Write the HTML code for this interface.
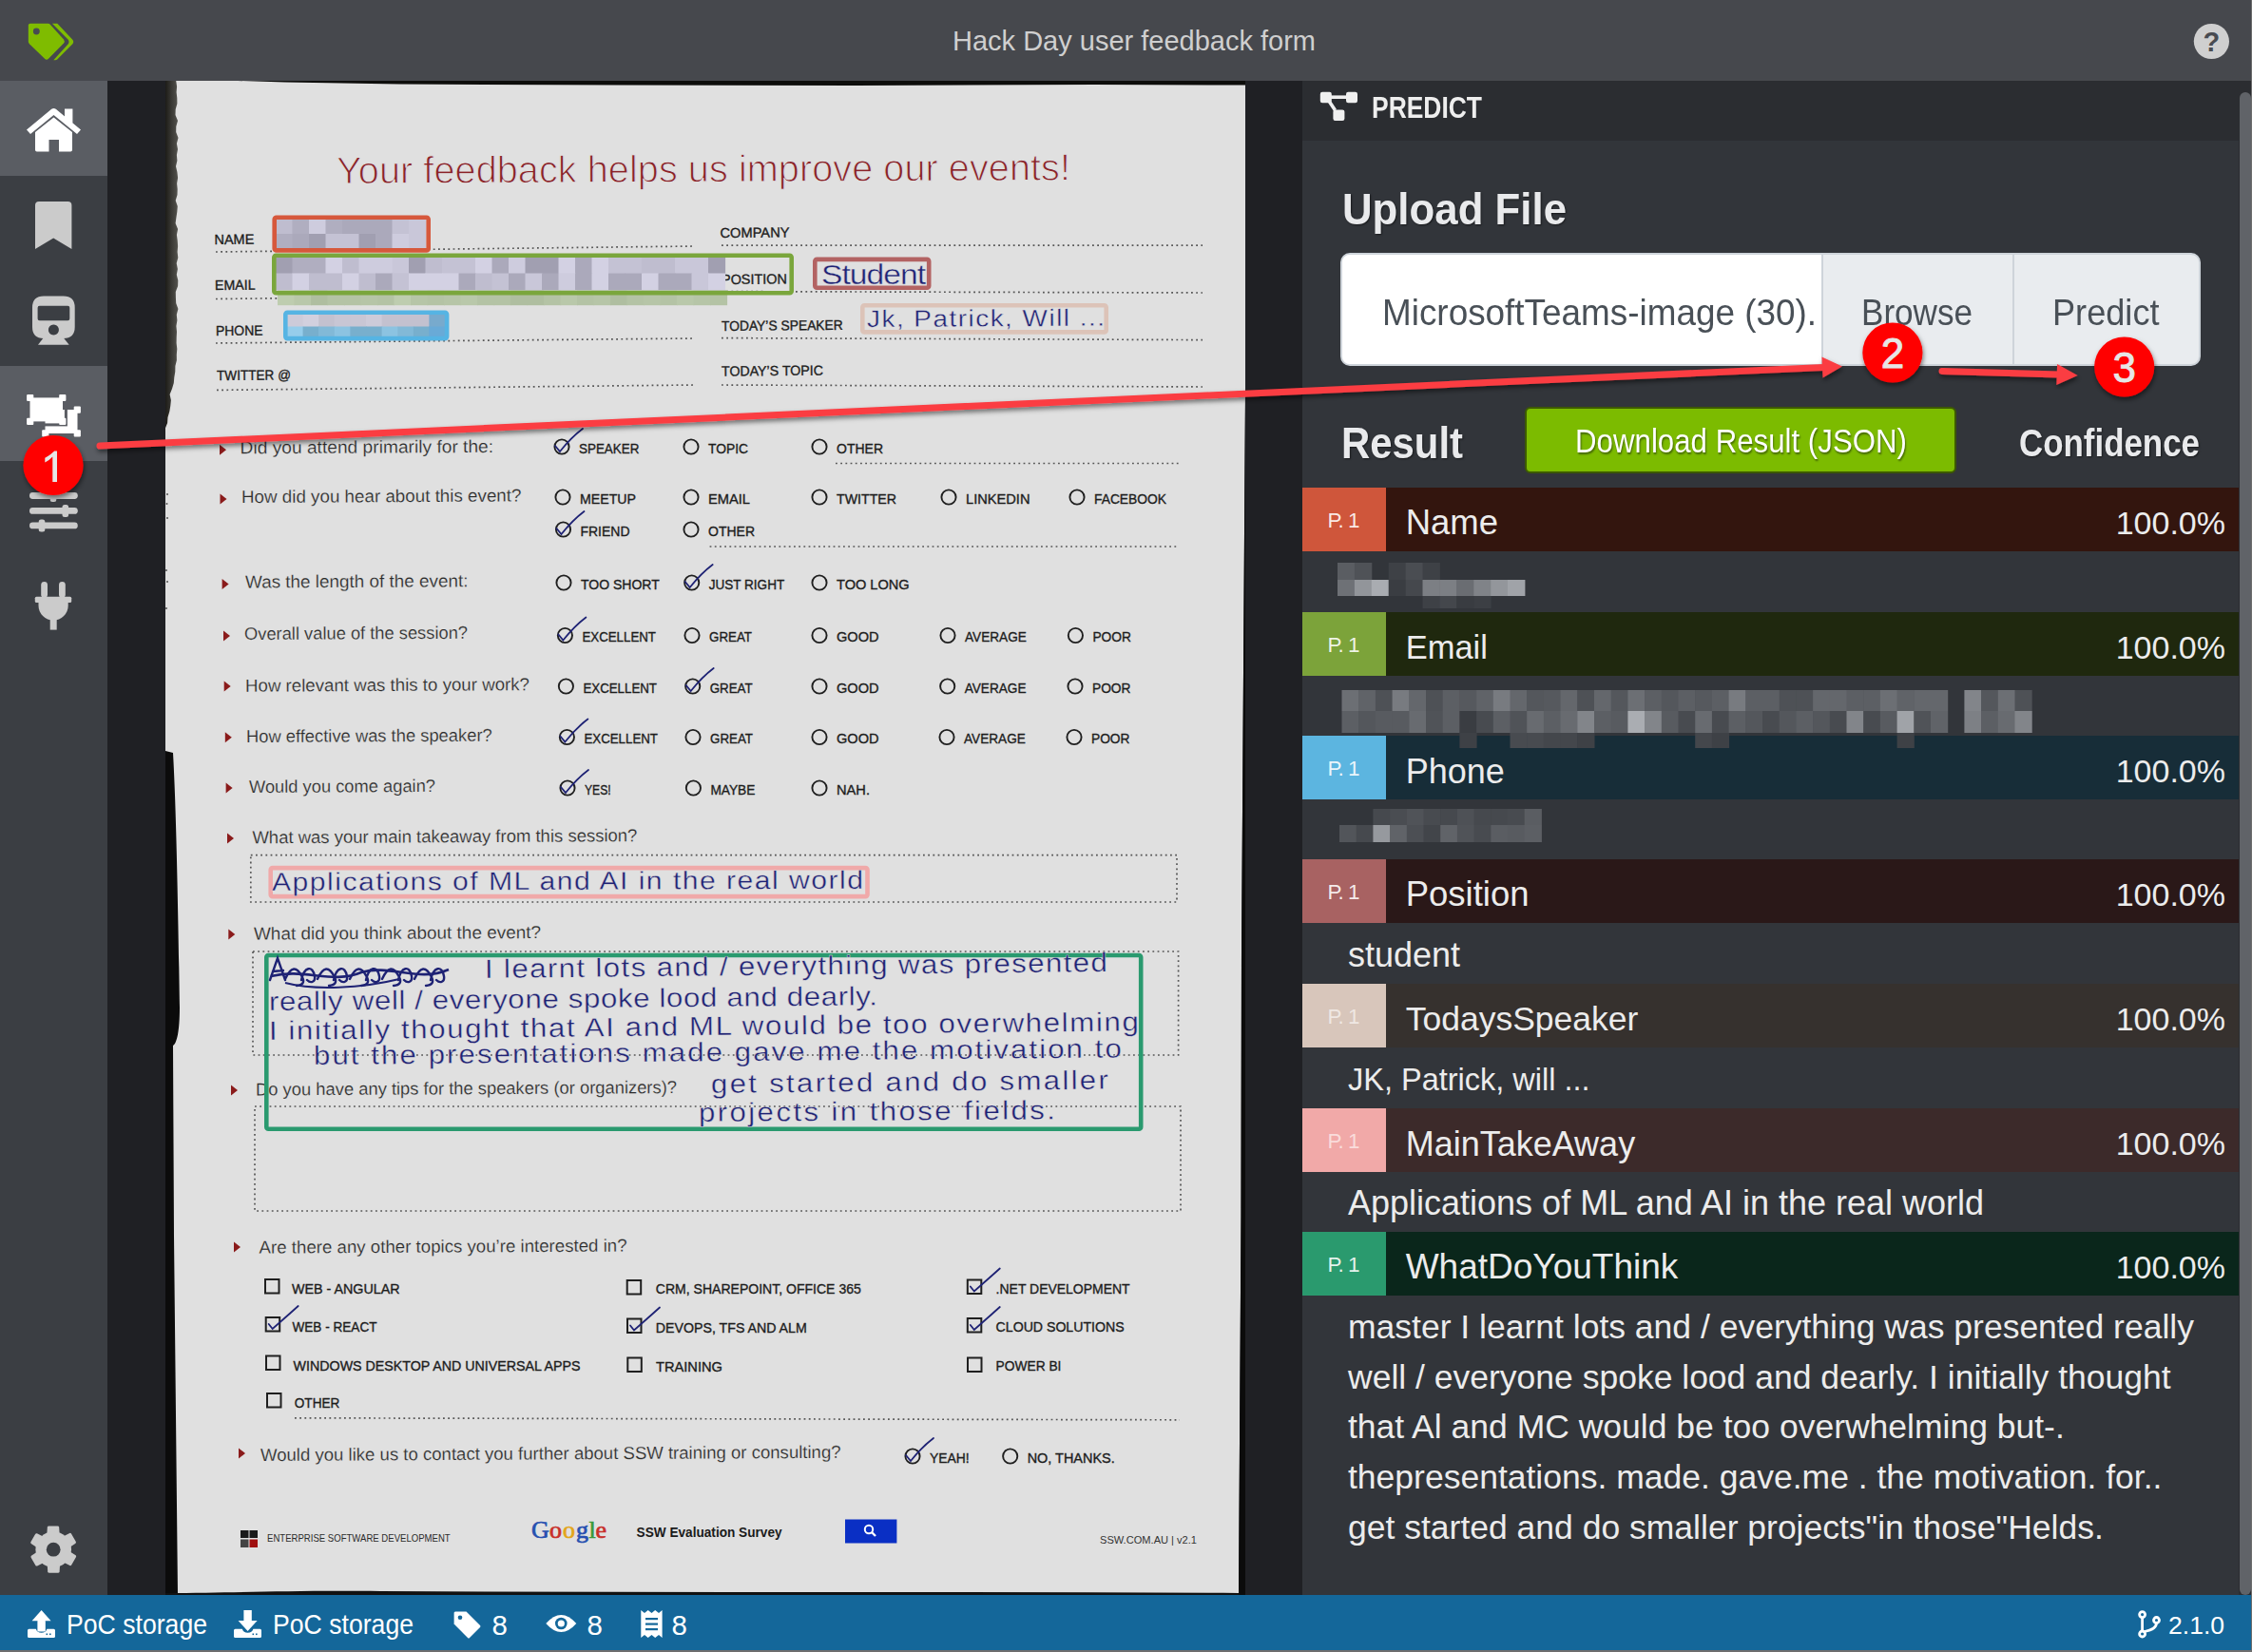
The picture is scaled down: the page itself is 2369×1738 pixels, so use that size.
<!DOCTYPE html><html><head><meta charset="utf-8"><title>VoTT</title><style>
html,body{margin:0;padding:0;}
body{width:2369px;height:1738px;overflow:hidden;position:relative;background:#6e6e6e;font-family:"Liberation Sans", sans-serif;}
svg{position:absolute;left:0;top:0;}
</style></head><body>
<div style="position:absolute;left:0px;top:0px;width:2368px;height:85px;background:#46484d;"></div>
<div style="position:absolute;left:0px;top:85px;width:113px;height:1593px;background:#3b3e43;"></div>
<div style="position:absolute;left:0px;top:85px;width:113px;height:100px;background:#5a5d63;"></div>
<div style="position:absolute;left:0px;top:385px;width:113px;height:100px;background:#5a5d63;"></div>
<div style="position:absolute;left:113px;top:85px;width:1257px;height:1593px;background:#1f2024;"></div>
<div style="position:absolute;left:1370px;top:85px;width:985px;height:1593px;background:#32353a;"></div>
<div style="position:absolute;left:1370px;top:85px;width:985px;height:63px;background:#2b2d31;"></div>
<div style="position:absolute;left:2355px;top:85px;width:13px;height:1593px;background:#2b2d31;"></div>
<div style="position:absolute;left:2356px;top:97px;width:12px;height:1581px;background:#606368;border-radius:6px;"></div>
<div style="position:absolute;left:0px;top:1678px;width:2368px;height:58px;background:#14679a;"></div>
<div style="position:absolute;left:1002px;top:26.15px;font-size:29px;line-height:35px;color:#cfcfcf;font-weight:400;white-space:nowrap;">Hack Day user feedback form</div>
<svg width="2369" height="1738" viewBox="0 0 2369 1738" style="position:absolute;left:0;top:0"><polygon points="174,85 1310,85 1310,415 1306,1000 1305.5,1280 1303,1678 174,1678" fill="#e0e0e0"/><defs><linearGradient id="le" x1="0" x2="1" y1="0" y2="0"><stop offset="0" stop-color="#1c1b16"/><stop offset="0.5" stop-color="#3a3935"/><stop offset="1" stop-color="#55544f"/></linearGradient></defs><polygon points="174,85 185.2,85 186.1,91 185.6,97 186.3,103 186.4,109 184.7,115 184.5,121 187.0,127 185.3,133 185.2,139 187.5,145 185.9,151 187.0,157 185.9,163 186.4,169 185.0,175 186.4,181 187.1,187 186.1,193 186.7,199 186.5,205 184.7,211 186.8,217 186.3,223 185.4,229 184.6,235 187.1,241 185.9,247 186.7,253 187.1,259 186.6,265 187.3,271 185.7,277 186.9,283 185.8,289 187.3,295 187.1,301 184.8,307 184.9,313 185.2,319 187.4,325 185.8,331 186.4,337 185.4,343 186.0,349 185.7,355 185.6,361 186.3,367 185.8,373 185.9,379 184.4,385 184.3,391 183.3,397 182.8,403 181.0,409 178.6,415 179.9,421 179.3,427 178.3,433 176.5,439 176.1,445 173.7,451 174,460" fill="url(#le)"/><path d="M174,790 L182,792 C186,860 188,1000 189,1060 C189,1085 186,1098 182,1100 L183,1300 L187,1678 L174,1678 Z" fill="#0b0b0b"/><polygon points="1310,415 1310,1678 1303,1678 1305.5,1280 1306,1000" fill="#0b0b0b"/><circle cx="176" cy="520" r="1" fill="#555"/><circle cx="175.5" cy="530" r="1" fill="#555"/><circle cx="176" cy="545" r="1" fill="#555"/><circle cx="175" cy="600" r="1" fill="#555"/><circle cx="176" cy="612" r="1" fill="#555"/><circle cx="175" cy="640" r="1" fill="#555"/><polygon points="250,85 1310,85 1310,89.5 1150,89 900,90 650,89.5 420,88.5 300,86.5" fill="#0d0d0b"/><text x="354" y="193" font-family="Liberation Sans" font-size="39.75" font-weight="400" font-style="normal" fill="#8a2228" textLength="772.0" lengthAdjust="spacingAndGlyphs" transform="rotate(-0.26 354 193)" stroke="#e0e0e0" stroke-width="1.1">Your feedback helps us improve our events!</text><text x="225.4" y="257" font-family="Liberation Sans" font-size="14.5" font-weight="400" font-style="normal" fill="#1d1d1d" textLength="42.0" lengthAdjust="spacingAndGlyphs" transform="rotate(-0.5 225.4 257)" stroke="#1d1d1d" stroke-width="0.35">NAME</text><text x="226" y="305" font-family="Liberation Sans" font-size="14.5" font-weight="400" font-style="normal" fill="#1d1d1d" textLength="42.6" lengthAdjust="spacingAndGlyphs" transform="rotate(-0.5 226 305)" stroke="#1d1d1d" stroke-width="0.35">EMAIL</text><text x="227" y="353" font-family="Liberation Sans" font-size="14.5" font-weight="400" font-style="normal" fill="#1d1d1d" textLength="49.6" lengthAdjust="spacingAndGlyphs" transform="rotate(-0.5 227 353)" stroke="#1d1d1d" stroke-width="0.35">PHONE</text><text x="228" y="400" font-family="Liberation Sans" font-size="14.5" font-weight="400" font-style="normal" fill="#1d1d1d" textLength="78.0" lengthAdjust="spacingAndGlyphs" transform="rotate(-0.5 228 400)" stroke="#1d1d1d" stroke-width="0.35">TWITTER @</text><text x="757.5" y="250" font-family="Liberation Sans" font-size="14.5" font-weight="400" font-style="normal" fill="#1d1d1d" textLength="73.0" lengthAdjust="spacingAndGlyphs" transform="rotate(-0.5 757.5 250)" stroke="#1d1d1d" stroke-width="0.35">COMPANY</text><text x="759" y="299" font-family="Liberation Sans" font-size="14.5" font-weight="400" font-style="normal" fill="#1d1d1d" textLength="69.0" lengthAdjust="spacingAndGlyphs" transform="rotate(-0.5 759 299)" stroke="#1d1d1d" stroke-width="0.35">POSITION</text><text x="759" y="348" font-family="Liberation Sans" font-size="14.5" font-weight="400" font-style="normal" fill="#1d1d1d" textLength="127.8" lengthAdjust="spacingAndGlyphs" transform="rotate(-0.5 759 348)" stroke="#1d1d1d" stroke-width="0.35">TODAY’S SPEAKER</text><text x="759" y="395.5" font-family="Liberation Sans" font-size="14.5" font-weight="400" font-style="normal" fill="#1d1d1d" textLength="107.0" lengthAdjust="spacingAndGlyphs" transform="rotate(-0.5 759 395.5)" stroke="#1d1d1d" stroke-width="0.35">TODAY’S TOPIC</text><line x1="227" y1="265" x2="729.5" y2="259" stroke="#555555" stroke-width="1.7" stroke-dasharray="1.8 3.4000000000000004"/><line x1="227" y1="314.5" x2="729.5" y2="309" stroke="#555555" stroke-width="1.7" stroke-dasharray="1.8 3.4000000000000004"/><line x1="227" y1="361" x2="729.5" y2="356" stroke="#555555" stroke-width="1.7" stroke-dasharray="1.8 3.4000000000000004"/><line x1="228" y1="410.4" x2="729.5" y2="405" stroke="#555555" stroke-width="1.7" stroke-dasharray="1.8 3.4000000000000004"/><line x1="759" y1="258.2" x2="1265" y2="258.2" stroke="#555555" stroke-width="1.7" stroke-dasharray="1.8 3.4000000000000004"/><line x1="759" y1="306.6" x2="1265" y2="308" stroke="#555555" stroke-width="1.7" stroke-dasharray="1.8 3.4000000000000004"/><line x1="759" y1="355.6" x2="1265" y2="357.6" stroke="#555555" stroke-width="1.7" stroke-dasharray="1.8 3.4000000000000004"/><line x1="759" y1="405" x2="1265" y2="407" stroke="#555555" stroke-width="1.7" stroke-dasharray="1.8 3.4000000000000004"/><rect x="290.0" y="230.0" width="18.1" height="16.6" fill="rgb(191,189,207)"/><rect x="307.5" y="230.0" width="18.1" height="16.6" fill="rgb(176,174,192)"/><rect x="325.0" y="230.0" width="18.1" height="16.6" fill="rgb(206,204,222)"/><rect x="342.5" y="230.0" width="18.1" height="16.6" fill="rgb(176,174,192)"/><rect x="360.0" y="230.0" width="18.1" height="16.6" fill="rgb(171,169,187)"/><rect x="377.5" y="230.0" width="18.1" height="16.6" fill="rgb(171,169,187)"/><rect x="395.0" y="230.0" width="18.1" height="16.6" fill="rgb(171,169,187)"/><rect x="412.5" y="230.0" width="18.1" height="16.6" fill="rgb(196,194,212)"/><rect x="430.0" y="230.0" width="18.1" height="16.6" fill="rgb(201,199,217)"/><rect x="290.0" y="246.0" width="18.1" height="16.6" fill="rgb(176,174,192)"/><rect x="307.5" y="246.0" width="18.1" height="16.6" fill="rgb(171,169,187)"/><rect x="325.0" y="246.0" width="18.1" height="16.6" fill="rgb(161,159,177)"/><rect x="342.5" y="246.0" width="18.1" height="16.6" fill="rgb(196,194,212)"/><rect x="360.0" y="246.0" width="18.1" height="16.6" fill="rgb(196,194,212)"/><rect x="377.5" y="246.0" width="18.1" height="16.6" fill="rgb(161,159,177)"/><rect x="395.0" y="246.0" width="18.1" height="16.6" fill="rgb(171,169,187)"/><rect x="412.5" y="246.0" width="18.1" height="16.6" fill="rgb(206,204,222)"/><rect x="430.0" y="246.0" width="18.1" height="16.6" fill="rgb(201,199,217)"/><rect x="290.0" y="270.0" width="18.1" height="18.1" fill="rgb(161,159,177)"/><rect x="307.5" y="270.0" width="18.1" height="18.1" fill="rgb(176,174,192)"/><rect x="325.0" y="270.0" width="18.1" height="18.1" fill="rgb(176,174,192)"/><rect x="342.5" y="270.0" width="18.1" height="18.1" fill="rgb(211,209,227)"/><rect x="360.0" y="270.0" width="18.1" height="18.1" fill="rgb(191,189,207)"/><rect x="377.5" y="270.0" width="18.1" height="18.1" fill="rgb(206,204,222)"/><rect x="395.0" y="270.0" width="18.1" height="18.1" fill="rgb(206,204,222)"/><rect x="412.5" y="270.0" width="18.1" height="18.1" fill="rgb(201,199,217)"/><rect x="430.0" y="270.0" width="18.1" height="18.1" fill="rgb(161,159,177)"/><rect x="447.5" y="270.0" width="18.1" height="18.1" fill="rgb(191,189,207)"/><rect x="465.0" y="270.0" width="18.1" height="18.1" fill="rgb(196,194,212)"/><rect x="482.5" y="270.0" width="18.1" height="18.1" fill="rgb(196,194,212)"/><rect x="500.0" y="270.0" width="18.1" height="18.1" fill="rgb(211,209,227)"/><rect x="517.5" y="270.0" width="18.1" height="18.1" fill="rgb(171,169,187)"/><rect x="535.0" y="270.0" width="18.1" height="18.1" fill="rgb(206,204,222)"/><rect x="552.5" y="270.0" width="18.1" height="18.1" fill="rgb(161,159,177)"/><rect x="570.0" y="270.0" width="18.1" height="18.1" fill="rgb(161,159,177)"/><rect x="587.5" y="270.0" width="18.1" height="18.1" fill="rgb(211,209,227)"/><rect x="605.0" y="270.0" width="18.1" height="18.1" fill="rgb(171,169,187)"/><rect x="622.5" y="270.0" width="18.1" height="18.1" fill="rgb(211,209,227)"/><rect x="640.0" y="270.0" width="18.1" height="18.1" fill="rgb(196,194,212)"/><rect x="657.5" y="270.0" width="18.1" height="18.1" fill="rgb(196,194,212)"/><rect x="675.0" y="270.0" width="18.1" height="18.1" fill="rgb(191,189,207)"/><rect x="692.5" y="270.0" width="18.1" height="18.1" fill="rgb(191,189,207)"/><rect x="710.0" y="270.0" width="18.1" height="18.1" fill="rgb(201,199,217)"/><rect x="727.5" y="270.0" width="18.1" height="18.1" fill="rgb(201,199,217)"/><rect x="745.0" y="270.0" width="18.1" height="18.1" fill="rgb(161,159,177)"/><rect x="290.0" y="287.5" width="18.1" height="18.1" fill="rgb(191,189,207)"/><rect x="307.5" y="287.5" width="18.1" height="18.1" fill="rgb(211,209,227)"/><rect x="325.0" y="287.5" width="18.1" height="18.1" fill="rgb(191,189,207)"/><rect x="342.5" y="287.5" width="18.1" height="18.1" fill="rgb(191,189,207)"/><rect x="360.0" y="287.5" width="18.1" height="18.1" fill="rgb(211,209,227)"/><rect x="377.5" y="287.5" width="18.1" height="18.1" fill="rgb(191,189,207)"/><rect x="395.0" y="287.5" width="18.1" height="18.1" fill="rgb(171,169,187)"/><rect x="412.5" y="287.5" width="18.1" height="18.1" fill="rgb(196,194,212)"/><rect x="430.0" y="287.5" width="18.1" height="18.1" fill="rgb(211,209,227)"/><rect x="447.5" y="287.5" width="18.1" height="18.1" fill="rgb(211,209,227)"/><rect x="465.0" y="287.5" width="18.1" height="18.1" fill="rgb(211,209,227)"/><rect x="482.5" y="287.5" width="18.1" height="18.1" fill="rgb(171,169,187)"/><rect x="500.0" y="287.5" width="18.1" height="18.1" fill="rgb(191,189,207)"/><rect x="517.5" y="287.5" width="18.1" height="18.1" fill="rgb(196,194,212)"/><rect x="535.0" y="287.5" width="18.1" height="18.1" fill="rgb(171,169,187)"/><rect x="552.5" y="287.5" width="18.1" height="18.1" fill="rgb(201,199,217)"/><rect x="570.0" y="287.5" width="18.1" height="18.1" fill="rgb(171,169,187)"/><rect x="587.5" y="287.5" width="18.1" height="18.1" fill="rgb(206,204,222)"/><rect x="605.0" y="287.5" width="18.1" height="18.1" fill="rgb(171,169,187)"/><rect x="622.5" y="287.5" width="18.1" height="18.1" fill="rgb(211,209,227)"/><rect x="640.0" y="287.5" width="18.1" height="18.1" fill="rgb(171,169,187)"/><rect x="657.5" y="287.5" width="18.1" height="18.1" fill="rgb(171,169,187)"/><rect x="675.0" y="287.5" width="18.1" height="18.1" fill="rgb(211,209,227)"/><rect x="692.5" y="287.5" width="18.1" height="18.1" fill="rgb(171,169,187)"/><rect x="710.0" y="287.5" width="18.1" height="18.1" fill="rgb(171,169,187)"/><rect x="727.5" y="287.5" width="18.1" height="18.1" fill="rgb(201,199,217)"/><rect x="745.0" y="287.5" width="18.1" height="18.1" fill="rgb(211,209,227)"/><rect x="292.0" y="305.0" width="18.1" height="16.2" fill="rgb(190,205,175)"/><rect x="309.5" y="305.0" width="18.1" height="16.2" fill="rgb(185,200,170)"/><rect x="327.0" y="305.0" width="18.1" height="16.2" fill="rgb(175,190,160)"/><rect x="344.5" y="305.0" width="18.1" height="16.2" fill="rgb(180,195,165)"/><rect x="362.0" y="305.0" width="18.1" height="16.2" fill="rgb(180,195,165)"/><rect x="379.5" y="305.0" width="18.1" height="16.2" fill="rgb(182,197,167)"/><rect x="397.0" y="305.0" width="18.1" height="16.2" fill="rgb(180,195,165)"/><rect x="414.5" y="305.0" width="18.1" height="16.2" fill="rgb(190,205,175)"/><rect x="432.0" y="305.0" width="18.1" height="16.2" fill="rgb(182,197,167)"/><rect x="449.5" y="305.0" width="18.1" height="16.2" fill="rgb(180,195,165)"/><rect x="467.0" y="305.0" width="18.1" height="16.2" fill="rgb(182,197,167)"/><rect x="484.5" y="305.0" width="18.1" height="16.2" fill="rgb(185,200,170)"/><rect x="502.0" y="305.0" width="18.1" height="16.2" fill="rgb(180,195,165)"/><rect x="519.5" y="305.0" width="18.1" height="16.2" fill="rgb(180,195,165)"/><rect x="537.0" y="305.0" width="18.1" height="16.2" fill="rgb(175,190,160)"/><rect x="554.5" y="305.0" width="18.1" height="16.2" fill="rgb(175,190,160)"/><rect x="572.0" y="305.0" width="18.1" height="16.2" fill="rgb(180,195,165)"/><rect x="589.5" y="305.0" width="18.1" height="16.2" fill="rgb(185,200,170)"/><rect x="607.0" y="305.0" width="18.1" height="16.2" fill="rgb(180,195,165)"/><rect x="624.5" y="305.0" width="18.1" height="16.2" fill="rgb(182,197,167)"/><rect x="642.0" y="305.0" width="18.1" height="16.2" fill="rgb(175,190,160)"/><rect x="659.5" y="305.0" width="18.1" height="16.2" fill="rgb(180,195,165)"/><rect x="677.0" y="305.0" width="18.1" height="16.2" fill="rgb(182,197,167)"/><rect x="694.5" y="305.0" width="18.1" height="16.2" fill="rgb(180,195,165)"/><rect x="712.0" y="305.0" width="18.1" height="16.2" fill="rgb(185,200,170)"/><rect x="729.5" y="305.0" width="18.1" height="16.2" fill="rgb(182,197,167)"/><rect x="747.0" y="305.0" width="18.1" height="16.2" fill="rgb(180,195,165)"/><rect x="302.0" y="330.0" width="17.2" height="14.1" fill="rgb(205,203,217)"/><rect x="318.6" y="330.0" width="17.2" height="14.1" fill="rgb(210,208,222)"/><rect x="335.2" y="330.0" width="17.2" height="14.1" fill="rgb(195,193,207)"/><rect x="351.8" y="330.0" width="17.2" height="14.1" fill="rgb(200,198,212)"/><rect x="368.4" y="330.0" width="17.2" height="14.1" fill="rgb(200,198,212)"/><rect x="385.0" y="330.0" width="17.2" height="14.1" fill="rgb(205,203,217)"/><rect x="401.6" y="330.0" width="17.2" height="14.1" fill="rgb(195,193,207)"/><rect x="418.2" y="330.0" width="17.2" height="14.1" fill="rgb(195,193,207)"/><rect x="434.8" y="330.0" width="17.2" height="14.1" fill="rgb(195,193,207)"/><rect x="451.4" y="330.0" width="17.2" height="14.1" fill="rgb(120,170,205)"/><rect x="302.0" y="343.5" width="17.2" height="14.1" fill="rgb(150,205,235)"/><rect x="318.6" y="343.5" width="17.2" height="14.1" fill="rgb(120,175,205)"/><rect x="335.2" y="343.5" width="17.2" height="14.1" fill="rgb(130,185,215)"/><rect x="351.8" y="343.5" width="17.2" height="14.1" fill="rgb(140,195,225)"/><rect x="368.4" y="343.5" width="17.2" height="14.1" fill="rgb(120,175,205)"/><rect x="385.0" y="343.5" width="17.2" height="14.1" fill="rgb(120,175,205)"/><rect x="401.6" y="343.5" width="17.2" height="14.1" fill="rgb(140,195,225)"/><rect x="418.2" y="343.5" width="17.2" height="14.1" fill="rgb(130,185,215)"/><rect x="434.8" y="343.5" width="17.2" height="14.1" fill="rgb(120,175,205)"/><rect x="451.4" y="343.5" width="17.2" height="14.1" fill="rgb(105,170,215)"/><rect x="288.7" y="228.8" width="162.00000000000003" height="34.59999999999999" rx="2" fill="none" stroke="#d6583c" stroke-width="4.6"/><rect x="288.3" y="268.8" width="544.4" height="39.4" rx="2" fill="none" stroke="#7aa63c" stroke-width="4.6"/><rect x="300.3" y="328.8" width="169.79999999999998" height="27.299999999999976" rx="2" fill="none" stroke="#56b4e3" stroke-width="4.6"/><rect x="857.3" y="272.90000000000003" width="119.9" height="29.799999999999976" rx="2" fill="none" stroke="#b36363" stroke-width="4.6"/><rect x="907.3" y="321.3" width="256.4" height="28.099999999999987" rx="2" fill="none" stroke="#dcc3b8" stroke-width="4.6"/><text x="0" y="0" font-family="Liberation Sans" font-size="30.0" fill="#1e2274" stroke="#e0e0e0" stroke-width="0.4" textLength="98.2" lengthAdjust="spacing" transform="translate(864 299) rotate(0) scale(1.12 1)">Student</text><text x="0" y="0" font-family="Liberation Sans" font-size="25.0" fill="#1e2274" stroke="#e0e0e0" stroke-width="0.4" textLength="223.2" lengthAdjust="spacing" transform="translate(912 344) rotate(-0.3) scale(1.12 1)">Jk, Patrick, Will ...</text><polygon points="231,467.8 238,473.3 231,478.8" fill="#8a1b1b"/><text x="252.6" y="477.3" font-family="Liberation Sans" font-size="18.5" font-weight="400" font-style="normal" fill="#2a2a2a" textLength="266.5" lengthAdjust="spacingAndGlyphs" transform="rotate(-0.3 252.6 477.3)" stroke="#e0e0e0" stroke-width="0.2">Did you attend primarily for the:</text><polygon points="231.5,519.5 238.5,525 231.5,530.5" fill="#8a1b1b"/><text x="254" y="529" font-family="Liberation Sans" font-size="18.5" font-weight="400" font-style="normal" fill="#2a2a2a" textLength="294.5" lengthAdjust="spacingAndGlyphs" transform="rotate(-0.3 254 529)" stroke="#e0e0e0" stroke-width="0.2">How did you hear about this event?</text><polygon points="233.6,609.0 240.6,614.5 233.6,620.0" fill="#8a1b1b"/><text x="258" y="618.5" font-family="Liberation Sans" font-size="18.5" font-weight="400" font-style="normal" fill="#2a2a2a" textLength="234.5" lengthAdjust="spacingAndGlyphs" transform="rotate(-0.3 258 618.5)" stroke="#e0e0e0" stroke-width="0.2">Was the length of the event:</text><polygon points="235,663.5 242,669 235,674.5" fill="#8a1b1b"/><text x="257" y="673" font-family="Liberation Sans" font-size="18.5" font-weight="400" font-style="normal" fill="#2a2a2a" textLength="235.0" lengthAdjust="spacingAndGlyphs" transform="rotate(-0.3 257 673)" stroke="#e0e0e0" stroke-width="0.2">Overall value of the session?</text><polygon points="235.7,716.5 242.7,722 235.7,727.5" fill="#8a1b1b"/><text x="258" y="727.7" font-family="Liberation Sans" font-size="18.5" font-weight="400" font-style="normal" fill="#2a2a2a" textLength="299.0" lengthAdjust="spacingAndGlyphs" transform="rotate(-0.3 258 727.7)" stroke="#e0e0e0" stroke-width="0.2">How relevant was this to your work?</text><polygon points="236.8,770.2 243.8,775.7 236.8,781.2" fill="#8a1b1b"/><text x="259" y="781" font-family="Liberation Sans" font-size="18.5" font-weight="400" font-style="normal" fill="#2a2a2a" textLength="258.7" lengthAdjust="spacingAndGlyphs" transform="rotate(-0.3 259 781)" stroke="#e0e0e0" stroke-width="0.2">How effective was the speaker?</text><polygon points="237.6,823.5 244.6,829 237.6,834.5" fill="#8a1b1b"/><text x="262" y="834" font-family="Liberation Sans" font-size="18.5" font-weight="400" font-style="normal" fill="#2a2a2a" textLength="196.0" lengthAdjust="spacingAndGlyphs" transform="rotate(-0.3 262 834)" stroke="#e0e0e0" stroke-width="0.2">Would you come again?</text><polygon points="239,876.5 246,882 239,887.5" fill="#8a1b1b"/><text x="265.4" y="887.3" font-family="Liberation Sans" font-size="18.5" font-weight="400" font-style="normal" fill="#2a2a2a" textLength="405.0" lengthAdjust="spacingAndGlyphs" transform="rotate(-0.3 265.4 887.3)" stroke="#e0e0e0" stroke-width="0.2">What was your main takeaway from this session?</text><polygon points="240.3,977.5 247.3,983 240.3,988.5" fill="#8a1b1b"/><text x="267" y="988.6" font-family="Liberation Sans" font-size="18.5" font-weight="400" font-style="normal" fill="#2a2a2a" textLength="302.0" lengthAdjust="spacingAndGlyphs" transform="rotate(-0.3 267 988.6)" stroke="#e0e0e0" stroke-width="0.2">What did you think about the event?</text><polygon points="243,1141.5 250,1147 243,1152.5" fill="#8a1b1b"/><text x="269" y="1152.4" font-family="Liberation Sans" font-size="18.5" font-weight="400" font-style="normal" fill="#2a2a2a" textLength="443.0" lengthAdjust="spacingAndGlyphs" transform="rotate(-0.3 269 1152.4)" stroke="#e0e0e0" stroke-width="0.2">Do you have any tips for the speakers (or organizers)?</text><polygon points="246,1306.5 253,1312 246,1317.5" fill="#8a1b1b"/><text x="272.6" y="1318.6" font-family="Liberation Sans" font-size="18.5" font-weight="400" font-style="normal" fill="#2a2a2a" textLength="387.0" lengthAdjust="spacingAndGlyphs" transform="rotate(-0.3 272.6 1318.6)" stroke="#e0e0e0" stroke-width="0.2">Are there any other topics you’re interested in?</text><polygon points="251,1523.5 258,1529 251,1534.5" fill="#8a1b1b"/><text x="274" y="1537" font-family="Liberation Sans" font-size="18.5" font-weight="400" font-style="normal" fill="#2a2a2a" textLength="610.6" lengthAdjust="spacingAndGlyphs" transform="rotate(-0.3 274 1537)" stroke="#e0e0e0" stroke-width="0.2">Would you like us to contact you further about SSW training or consulting?</text><circle cx="591" cy="470" r="7.6" fill="none" stroke="#1f1f1f" stroke-width="1.9"/><text x="609" y="476.6" font-family="Liberation Sans" font-size="14.2" font-weight="400" font-style="normal" fill="#1d1d1d" textLength="63.4" lengthAdjust="spacingAndGlyphs" stroke="#1d1d1d" stroke-width="0.35">SPEAKER</text><path d="M584,469 L589,475 C597,465 605,457 613,451" fill="none" stroke="#1e2274" stroke-width="1.8" stroke-linecap="round"/><circle cx="727" cy="470" r="7.6" fill="none" stroke="#1f1f1f" stroke-width="1.9"/><text x="745" y="476.6" font-family="Liberation Sans" font-size="14.2" font-weight="400" font-style="normal" fill="#1d1d1d" textLength="42.0" lengthAdjust="spacingAndGlyphs" stroke="#1d1d1d" stroke-width="0.35">TOPIC</text><circle cx="862" cy="470" r="7.6" fill="none" stroke="#1f1f1f" stroke-width="1.9"/><text x="880" y="476.6" font-family="Liberation Sans" font-size="14.2" font-weight="400" font-style="normal" fill="#1d1d1d" textLength="49.0" lengthAdjust="spacingAndGlyphs" stroke="#1d1d1d" stroke-width="0.35">OTHER</text><circle cx="592" cy="523" r="7.6" fill="none" stroke="#1f1f1f" stroke-width="1.9"/><text x="610" y="529.6" font-family="Liberation Sans" font-size="14.2" font-weight="400" font-style="normal" fill="#1d1d1d" textLength="59.0" lengthAdjust="spacingAndGlyphs" stroke="#1d1d1d" stroke-width="0.35">MEETUP</text><circle cx="727" cy="523" r="7.6" fill="none" stroke="#1f1f1f" stroke-width="1.9"/><text x="745" y="529.6" font-family="Liberation Sans" font-size="14.2" font-weight="400" font-style="normal" fill="#1d1d1d" textLength="44.0" lengthAdjust="spacingAndGlyphs" stroke="#1d1d1d" stroke-width="0.35">EMAIL</text><circle cx="862" cy="523" r="7.6" fill="none" stroke="#1f1f1f" stroke-width="1.9"/><text x="880" y="529.6" font-family="Liberation Sans" font-size="14.2" font-weight="400" font-style="normal" fill="#1d1d1d" textLength="63.0" lengthAdjust="spacingAndGlyphs" stroke="#1d1d1d" stroke-width="0.35">TWITTER</text><circle cx="998" cy="523" r="7.6" fill="none" stroke="#1f1f1f" stroke-width="1.9"/><text x="1016" y="529.6" font-family="Liberation Sans" font-size="14.2" font-weight="400" font-style="normal" fill="#1d1d1d" textLength="67.5" lengthAdjust="spacingAndGlyphs" stroke="#1d1d1d" stroke-width="0.35">LINKEDIN</text><circle cx="1133" cy="523" r="7.6" fill="none" stroke="#1f1f1f" stroke-width="1.9"/><text x="1151" y="529.6" font-family="Liberation Sans" font-size="14.2" font-weight="400" font-style="normal" fill="#1d1d1d" textLength="76.0" lengthAdjust="spacingAndGlyphs" stroke="#1d1d1d" stroke-width="0.35">FACEBOOK</text><circle cx="592.5" cy="557" r="7.6" fill="none" stroke="#1f1f1f" stroke-width="1.9"/><text x="610.5" y="563.6" font-family="Liberation Sans" font-size="14.2" font-weight="400" font-style="normal" fill="#1d1d1d" textLength="52.0" lengthAdjust="spacingAndGlyphs" stroke="#1d1d1d" stroke-width="0.35">FRIEND</text><path d="M585.5,556 L590.5,562 C598.5,552 606.5,544 614.5,538" fill="none" stroke="#1e2274" stroke-width="1.8" stroke-linecap="round"/><circle cx="727" cy="557" r="7.6" fill="none" stroke="#1f1f1f" stroke-width="1.9"/><text x="745" y="563.6" font-family="Liberation Sans" font-size="14.2" font-weight="400" font-style="normal" fill="#1d1d1d" textLength="49.0" lengthAdjust="spacingAndGlyphs" stroke="#1d1d1d" stroke-width="0.35">OTHER</text><circle cx="593" cy="613" r="7.6" fill="none" stroke="#1f1f1f" stroke-width="1.9"/><text x="611" y="619.6" font-family="Liberation Sans" font-size="14.2" font-weight="400" font-style="normal" fill="#1d1d1d" textLength="82.7" lengthAdjust="spacingAndGlyphs" stroke="#1d1d1d" stroke-width="0.35">TOO SHORT</text><circle cx="727.7" cy="613" r="7.6" fill="none" stroke="#1f1f1f" stroke-width="1.9"/><text x="745.7" y="619.6" font-family="Liberation Sans" font-size="14.2" font-weight="400" font-style="normal" fill="#1d1d1d" textLength="79.5" lengthAdjust="spacingAndGlyphs" stroke="#1d1d1d" stroke-width="0.35">JUST RIGHT</text><path d="M720.7,612 L725.7,618 C733.7,608 741.7,600 749.7,594" fill="none" stroke="#1e2274" stroke-width="1.8" stroke-linecap="round"/><circle cx="862" cy="613" r="7.6" fill="none" stroke="#1f1f1f" stroke-width="1.9"/><text x="880" y="619.6" font-family="Liberation Sans" font-size="14.2" font-weight="400" font-style="normal" fill="#1d1d1d" textLength="76.6" lengthAdjust="spacingAndGlyphs" stroke="#1d1d1d" stroke-width="0.35">TOO LONG</text><circle cx="594.4" cy="668.5" r="7.6" fill="none" stroke="#1f1f1f" stroke-width="1.9"/><text x="612.4" y="675.1" font-family="Liberation Sans" font-size="14.2" font-weight="400" font-style="normal" fill="#1d1d1d" textLength="77.6" lengthAdjust="spacingAndGlyphs" stroke="#1d1d1d" stroke-width="0.35">EXCELLENT</text><path d="M587.4,667.5 L592.4,673.5 C600.4,663.5 608.4,655.5 616.4,649.5" fill="none" stroke="#1e2274" stroke-width="1.8" stroke-linecap="round"/><circle cx="728" cy="668.5" r="7.6" fill="none" stroke="#1f1f1f" stroke-width="1.9"/><text x="746" y="675.1" font-family="Liberation Sans" font-size="14.2" font-weight="400" font-style="normal" fill="#1d1d1d" textLength="45.0" lengthAdjust="spacingAndGlyphs" stroke="#1d1d1d" stroke-width="0.35">GREAT</text><circle cx="862" cy="668.5" r="7.6" fill="none" stroke="#1f1f1f" stroke-width="1.9"/><text x="880" y="675.1" font-family="Liberation Sans" font-size="14.2" font-weight="400" font-style="normal" fill="#1d1d1d" textLength="44.5" lengthAdjust="spacingAndGlyphs" stroke="#1d1d1d" stroke-width="0.35">GOOD</text><circle cx="997" cy="668.5" r="7.6" fill="none" stroke="#1f1f1f" stroke-width="1.9"/><text x="1015" y="675.1" font-family="Liberation Sans" font-size="14.2" font-weight="400" font-style="normal" fill="#1d1d1d" textLength="64.8" lengthAdjust="spacingAndGlyphs" stroke="#1d1d1d" stroke-width="0.35">AVERAGE</text><circle cx="1131.4" cy="668.5" r="7.6" fill="none" stroke="#1f1f1f" stroke-width="1.9"/><text x="1149.4" y="675.1" font-family="Liberation Sans" font-size="14.2" font-weight="400" font-style="normal" fill="#1d1d1d" textLength="40.5" lengthAdjust="spacingAndGlyphs" stroke="#1d1d1d" stroke-width="0.35">POOR</text><circle cx="595.4" cy="722" r="7.6" fill="none" stroke="#1f1f1f" stroke-width="1.9"/><text x="613.4" y="728.6" font-family="Liberation Sans" font-size="14.2" font-weight="400" font-style="normal" fill="#1d1d1d" textLength="77.6" lengthAdjust="spacingAndGlyphs" stroke="#1d1d1d" stroke-width="0.35">EXCELLENT</text><circle cx="728.7" cy="722" r="7.6" fill="none" stroke="#1f1f1f" stroke-width="1.9"/><text x="746.7" y="728.6" font-family="Liberation Sans" font-size="14.2" font-weight="400" font-style="normal" fill="#1d1d1d" textLength="45.0" lengthAdjust="spacingAndGlyphs" stroke="#1d1d1d" stroke-width="0.35">GREAT</text><path d="M721.7,721 L726.7,727 C734.7,717 742.7,709 750.7,703" fill="none" stroke="#1e2274" stroke-width="1.8" stroke-linecap="round"/><circle cx="862" cy="722" r="7.6" fill="none" stroke="#1f1f1f" stroke-width="1.9"/><text x="880" y="728.6" font-family="Liberation Sans" font-size="14.2" font-weight="400" font-style="normal" fill="#1d1d1d" textLength="44.5" lengthAdjust="spacingAndGlyphs" stroke="#1d1d1d" stroke-width="0.35">GOOD</text><circle cx="996.7" cy="722" r="7.6" fill="none" stroke="#1f1f1f" stroke-width="1.9"/><text x="1014.7" y="728.6" font-family="Liberation Sans" font-size="14.2" font-weight="400" font-style="normal" fill="#1d1d1d" textLength="64.8" lengthAdjust="spacingAndGlyphs" stroke="#1d1d1d" stroke-width="0.35">AVERAGE</text><circle cx="1131" cy="722" r="7.6" fill="none" stroke="#1f1f1f" stroke-width="1.9"/><text x="1149" y="728.6" font-family="Liberation Sans" font-size="14.2" font-weight="400" font-style="normal" fill="#1d1d1d" textLength="40.5" lengthAdjust="spacingAndGlyphs" stroke="#1d1d1d" stroke-width="0.35">POOR</text><circle cx="596.4" cy="775.5" r="7.6" fill="none" stroke="#1f1f1f" stroke-width="1.9"/><text x="614.4" y="782.1" font-family="Liberation Sans" font-size="14.2" font-weight="400" font-style="normal" fill="#1d1d1d" textLength="77.6" lengthAdjust="spacingAndGlyphs" stroke="#1d1d1d" stroke-width="0.35">EXCELLENT</text><path d="M589.4,774.5 L594.4,780.5 C602.4,770.5 610.4,762.5 618.4,756.5" fill="none" stroke="#1e2274" stroke-width="1.8" stroke-linecap="round"/><circle cx="729" cy="775.5" r="7.6" fill="none" stroke="#1f1f1f" stroke-width="1.9"/><text x="747" y="782.1" font-family="Liberation Sans" font-size="14.2" font-weight="400" font-style="normal" fill="#1d1d1d" textLength="45.0" lengthAdjust="spacingAndGlyphs" stroke="#1d1d1d" stroke-width="0.35">GREAT</text><circle cx="862" cy="775.5" r="7.6" fill="none" stroke="#1f1f1f" stroke-width="1.9"/><text x="880" y="782.1" font-family="Liberation Sans" font-size="14.2" font-weight="400" font-style="normal" fill="#1d1d1d" textLength="44.5" lengthAdjust="spacingAndGlyphs" stroke="#1d1d1d" stroke-width="0.35">GOOD</text><circle cx="996" cy="775.5" r="7.6" fill="none" stroke="#1f1f1f" stroke-width="1.9"/><text x="1014" y="782.1" font-family="Liberation Sans" font-size="14.2" font-weight="400" font-style="normal" fill="#1d1d1d" textLength="64.8" lengthAdjust="spacingAndGlyphs" stroke="#1d1d1d" stroke-width="0.35">AVERAGE</text><circle cx="1130" cy="775.5" r="7.6" fill="none" stroke="#1f1f1f" stroke-width="1.9"/><text x="1148" y="782.1" font-family="Liberation Sans" font-size="14.2" font-weight="400" font-style="normal" fill="#1d1d1d" textLength="40.5" lengthAdjust="spacingAndGlyphs" stroke="#1d1d1d" stroke-width="0.35">POOR</text><circle cx="597" cy="829" r="7.6" fill="none" stroke="#1f1f1f" stroke-width="1.9"/><text x="615" y="835.6" font-family="Liberation Sans" font-size="14.2" font-weight="400" font-style="normal" fill="#1d1d1d" textLength="27.7" lengthAdjust="spacingAndGlyphs" stroke="#1d1d1d" stroke-width="0.35">YES!</text><path d="M590,828 L595,834 C603,824 611,816 619,810" fill="none" stroke="#1e2274" stroke-width="1.8" stroke-linecap="round"/><circle cx="729.4" cy="829" r="7.6" fill="none" stroke="#1f1f1f" stroke-width="1.9"/><text x="747.4" y="835.6" font-family="Liberation Sans" font-size="14.2" font-weight="400" font-style="normal" fill="#1d1d1d" textLength="47.0" lengthAdjust="spacingAndGlyphs" stroke="#1d1d1d" stroke-width="0.35">MAYBE</text><circle cx="862" cy="829" r="7.6" fill="none" stroke="#1f1f1f" stroke-width="1.9"/><text x="880" y="835.6" font-family="Liberation Sans" font-size="14.2" font-weight="400" font-style="normal" fill="#1d1d1d" textLength="35.0" lengthAdjust="spacingAndGlyphs" stroke="#1d1d1d" stroke-width="0.35">NAH.</text><line x1="879" y1="487.5" x2="1240" y2="487.5" stroke="#555555" stroke-width="1.7" stroke-dasharray="1.8 3.4000000000000004"/><line x1="746.6" y1="575" x2="1240" y2="575" stroke="#555555" stroke-width="1.7" stroke-dasharray="1.8 3.4000000000000004"/><rect x="263.8" y="899.6" width="974.2" height="49.39999999999998" fill="none" stroke="#555555" stroke-width="1.7" stroke-dasharray="1.8 3.4"/><rect x="266" y="1001" width="973.5999999999999" height="109" fill="none" stroke="#555555" stroke-width="1.7" stroke-dasharray="1.8 3.4"/><rect x="268" y="1164" width="974" height="110" fill="none" stroke="#555555" stroke-width="1.7" stroke-dasharray="1.8 3.4"/><rect x="284.7" y="913.0999999999999" width="627.8" height="30.00000000000002" rx="2" fill="none" stroke="#f0a9a9" stroke-width="4.6"/><text x="0" y="0" font-family="Liberation Sans" font-size="27.0" fill="#1e2274" stroke="#e0e0e0" stroke-width="0.4" textLength="555.4" lengthAdjust="spacing" transform="translate(286 937) rotate(-0.2) scale(1.12 1)">Applications of  ML and  AI  in  the real world</text><rect x="280.3" y="1005.0" width="919.9" height="182.69999999999996" rx="2" fill="none" stroke="#2a9a6f" stroke-width="4.6"/><path d="M284,1031 L292,1008 L300,1031 M287,1022 L298,1021 M300,1030 q9,-20 18,-2 q4,8 -6,9 M317,1031 c3,-14 12,-16 14,-4 c1,6 -4,8 -8,4 M334,1030 q9,-20 18,-2 q4,8 -6,9 M351,1031 c3,-14 12,-16 14,-4 c1,6 -4,8 -8,4 M368,1030 q9,-20 18,-2 q4,8 -6,9 M385,1031 c3,-14 12,-16 14,-4 c1,6 -4,8 -8,4 M402,1030 q9,-20 18,-2 q4,8 -6,9 M419,1031 c3,-14 12,-16 14,-4 c1,6 -4,8 -8,4 M436,1030 q9,-20 18,-2 q4,8 -6,9 M453,1031 c3,-14 12,-16 14,-4 c1,6 -4,8 -8,4 " fill="none" stroke="#1e2274" stroke-width="2.4" stroke-linecap="round"/><path d="M285,1027 C320,1018 350,1036 380,1023 C410,1014 440,1034 472,1020" fill="none" stroke="#1e2274" stroke-width="2.6"/><path d="M300,1034 C330,1042 380,1040 420,1030" fill="none" stroke="#1e2274" stroke-width="2"/><text x="0" y="0" font-family="Liberation Sans" font-size="28.0" fill="#1e2274" stroke="#e0e0e0" stroke-width="0.4" textLength="584.8" lengthAdjust="spacing" transform="translate(510 1029) rotate(-0.6) scale(1.12 1)">I  learnt  lots  and  / everything  was  presented</text><text x="0" y="0" font-family="Liberation Sans" font-size="28.0" fill="#1e2274" stroke="#e0e0e0" stroke-width="0.4" textLength="571.4" lengthAdjust="spacing" transform="translate(283 1063) rotate(-0.5) scale(1.12 1)">really  well /  everyone  spoke  lood  and  dearly.</text><text x="0" y="0" font-family="Liberation Sans" font-size="28.0" fill="#1e2274" stroke="#e0e0e0" stroke-width="0.4" textLength="817.0" lengthAdjust="spacing" transform="translate(283 1094) rotate(-0.6) scale(1.12 1)">I initially  thought  that  AI  and  ML  would  be  too  overwhelming</text><text x="0" y="0" font-family="Liberation Sans" font-size="28.0" fill="#1e2274" stroke="#e0e0e0" stroke-width="0.4" textLength="758.9" lengthAdjust="spacing" transform="translate(330 1120) rotate(-0.5) scale(1.12 1)">but  the  presentations  made  gave  me  the  motivation  to</text><text x="0" y="0" font-family="Liberation Sans" font-size="28.0" fill="#1e2274" stroke="#e0e0e0" stroke-width="0.4" textLength="373.2" lengthAdjust="spacing" transform="translate(748 1150) rotate(-0.6) scale(1.12 1)">get  started  and  do  smaller</text><text x="0" y="0" font-family="Liberation Sans" font-size="28.0" fill="#1e2274" stroke="#e0e0e0" stroke-width="0.4" textLength="334.8" lengthAdjust="spacing" transform="translate(735 1180) rotate(-0.4) scale(1.12 1)">projects  in  those  fields.</text><rect x="279" y="1346" width="14.5" height="14.5" fill="none" stroke="#1f1f1f" stroke-width="2"/><text x="307" y="1360.5" font-family="Liberation Sans" font-size="14.2" font-weight="400" font-style="normal" fill="#1d1d1d" textLength="113.5" lengthAdjust="spacingAndGlyphs" stroke="#1d1d1d" stroke-width="0.35">WEB - ANGULAR</text><rect x="279.7" y="1386" width="14.5" height="14.5" fill="none" stroke="#1f1f1f" stroke-width="2"/><text x="307.5" y="1401" font-family="Liberation Sans" font-size="14.2" font-weight="400" font-style="normal" fill="#1d1d1d" textLength="89.0" lengthAdjust="spacingAndGlyphs" stroke="#1d1d1d" stroke-width="0.35">WEB - REACT</text><path d="M282.7,1393 L286.7,1398 C294.7,1391 304.7,1382 313.7,1374" fill="none" stroke="#1e2274" stroke-width="1.8" stroke-linecap="round"/><rect x="280" y="1426.5" width="14.5" height="14.5" fill="none" stroke="#1f1f1f" stroke-width="2"/><text x="308.6" y="1441.7" font-family="Liberation Sans" font-size="14.2" font-weight="400" font-style="normal" fill="#1d1d1d" textLength="302.0" lengthAdjust="spacingAndGlyphs" stroke="#1d1d1d" stroke-width="0.35">WINDOWS DESKTOP AND UNIVERSAL APPS</text><rect x="281" y="1466" width="14.5" height="14.5" fill="none" stroke="#1f1f1f" stroke-width="2"/><text x="309.8" y="1480.5" font-family="Liberation Sans" font-size="14.2" font-weight="400" font-style="normal" fill="#1d1d1d" textLength="47.5" lengthAdjust="spacingAndGlyphs" stroke="#1d1d1d" stroke-width="0.35">OTHER</text><rect x="659.7" y="1347" width="14.5" height="14.5" fill="none" stroke="#1f1f1f" stroke-width="2"/><text x="689.8" y="1361" font-family="Liberation Sans" font-size="14.2" font-weight="400" font-style="normal" fill="#1d1d1d" textLength="216.0" lengthAdjust="spacingAndGlyphs" stroke="#1d1d1d" stroke-width="0.35">CRM, SHAREPOINT, OFFICE 365</text><rect x="660" y="1387.5" width="14.5" height="14.5" fill="none" stroke="#1f1f1f" stroke-width="2"/><text x="689.8" y="1401.7" font-family="Liberation Sans" font-size="14.2" font-weight="400" font-style="normal" fill="#1d1d1d" textLength="159.0" lengthAdjust="spacingAndGlyphs" stroke="#1d1d1d" stroke-width="0.35">DEVOPS, TFS AND ALM</text><path d="M663,1394.5 L667,1399.5 C675,1392.5 685,1383.5 694,1375.5" fill="none" stroke="#1e2274" stroke-width="1.8" stroke-linecap="round"/><rect x="660.3" y="1428.5" width="14.5" height="14.5" fill="none" stroke="#1f1f1f" stroke-width="2"/><text x="690" y="1443" font-family="Liberation Sans" font-size="14.2" font-weight="400" font-style="normal" fill="#1d1d1d" textLength="70.0" lengthAdjust="spacingAndGlyphs" stroke="#1d1d1d" stroke-width="0.35">TRAINING</text><rect x="1017.8" y="1346.5" width="14.5" height="14.5" fill="none" stroke="#1f1f1f" stroke-width="2"/><text x="1047.6" y="1361" font-family="Liberation Sans" font-size="14.2" font-weight="400" font-style="normal" fill="#1d1d1d" textLength="141.0" lengthAdjust="spacingAndGlyphs" stroke="#1d1d1d" stroke-width="0.35">.NET DEVELOPMENT</text><path d="M1020.8,1353.5 L1024.8,1358.5 C1032.8,1351.5 1042.8,1342.5 1051.8,1334.5" fill="none" stroke="#1e2274" stroke-width="1.8" stroke-linecap="round"/><rect x="1017.8" y="1387" width="14.5" height="14.5" fill="none" stroke="#1f1f1f" stroke-width="2"/><text x="1047.6" y="1400.7" font-family="Liberation Sans" font-size="14.2" font-weight="400" font-style="normal" fill="#1d1d1d" textLength="135.0" lengthAdjust="spacingAndGlyphs" stroke="#1d1d1d" stroke-width="0.35">CLOUD SOLUTIONS</text><path d="M1020.8,1394 L1024.8,1399 C1032.8,1392 1042.8,1383 1051.8,1375" fill="none" stroke="#1e2274" stroke-width="1.8" stroke-linecap="round"/><rect x="1018" y="1428.5" width="14.5" height="14.5" fill="none" stroke="#1f1f1f" stroke-width="2"/><text x="1047.6" y="1441.7" font-family="Liberation Sans" font-size="14.2" font-weight="400" font-style="normal" fill="#1d1d1d" textLength="68.8" lengthAdjust="spacingAndGlyphs" stroke="#1d1d1d" stroke-width="0.35">POWER BI</text><line x1="310" y1="1491.8" x2="1241" y2="1493.8" stroke="#555555" stroke-width="1.7" stroke-dasharray="1.8 3.4000000000000004"/><circle cx="960" cy="1532" r="7.6" fill="none" stroke="#1f1f1f" stroke-width="1.9"/><text x="978" y="1538.6" font-family="Liberation Sans" font-size="14.2" font-weight="400" font-style="normal" fill="#1d1d1d" textLength="41.7" lengthAdjust="spacingAndGlyphs" stroke="#1d1d1d" stroke-width="0.35">YEAH!</text><path d="M953,1531 L958,1537 C966,1527 974,1519 982,1513" fill="none" stroke="#1e2274" stroke-width="1.8" stroke-linecap="round"/><circle cx="1062.7" cy="1532" r="7.6" fill="none" stroke="#1f1f1f" stroke-width="1.9"/><text x="1080.7" y="1538.6" font-family="Liberation Sans" font-size="14.2" font-weight="400" font-style="normal" fill="#1d1d1d" textLength="92.0" lengthAdjust="spacingAndGlyphs" stroke="#1d1d1d" stroke-width="0.35">NO, THANKS.</text><rect x="253" y="1610" width="8.5" height="8" fill="#1a1a1a"/><rect x="262.5" y="1610" width="8.5" height="8" fill="#1a1a1a"/><rect x="253" y="1619.5" width="8.5" height="8.5" fill="#444"/><rect x="262.5" y="1619.5" width="8.5" height="8.5" fill="#a01010"/><text x="281" y="1622" font-family="Liberation Sans" font-size="11" font-weight="400" font-style="normal" fill="#2b2b2b" textLength="192.7" lengthAdjust="spacingAndGlyphs">ENTERPRISE SOFTWARE DEVELOPMENT</text><text x="559" y="1618" font-family="Liberation Serif" font-size="26" font-weight="400" font-style="normal" fill="#2750b0" stroke="#2750b0" stroke-width="0.7">G</text><text x="578" y="1618" font-family="Liberation Serif" font-size="26" font-weight="400" font-style="normal" fill="#c8302a" stroke="#c8302a" stroke-width="0.7">o</text><text x="592" y="1618" font-family="Liberation Serif" font-size="26" font-weight="400" font-style="normal" fill="#e3a51a" stroke="#e3a51a" stroke-width="0.7">o</text><text x="606" y="1618" font-family="Liberation Serif" font-size="26" font-weight="400" font-style="normal" fill="#2750b0" stroke="#2750b0" stroke-width="0.7">g</text><text x="619.5" y="1618" font-family="Liberation Serif" font-size="26" font-weight="400" font-style="normal" fill="#3a9a3a" stroke="#3a9a3a" stroke-width="0.7">l</text><text x="626.5" y="1618" font-family="Liberation Serif" font-size="26" font-weight="400" font-style="normal" fill="#c8302a" stroke="#c8302a" stroke-width="0.7">e</text><text x="669.6" y="1617" font-family="Liberation Sans" font-size="14" font-weight="700" font-style="normal" fill="#1a1a1a" textLength="153.0" lengthAdjust="spacingAndGlyphs">SSW Evaluation Survey</text><rect x="889" y="1598.5" width="54.4" height="25" fill="#0a2fc4"/><circle cx="914" cy="1609" r="4.2" fill="none" stroke="#fff" stroke-width="2"/><line x1="917" y1="1612" x2="921" y2="1616" stroke="#fff" stroke-width="2.4"/><text x="1157" y="1624" font-family="Liberation Sans" font-size="10.5" font-weight="400" font-style="normal" fill="#333" textLength="102.0" lengthAdjust="spacingAndGlyphs">SSW.COM.AU  |  v2.1</text><path d="M174,1678 L1303,1678 L1303,1676 C1000,1674 700,1676 400,1674 C300,1673 250,1676 174,1676 Z" fill="#111"/></svg>
<div style="position:absolute;left:1443px;top:94.76px;font-size:31px;line-height:37px;color:#eeeeee;font-weight:700;white-space:nowrap;transform:scaleX(0.8525);transform-origin:left center;">PREDICT</div>
<div style="position:absolute;left:1411.5px;top:192.73px;font-size:45.5px;line-height:55px;color:#e9eaec;font-weight:700;white-space:nowrap;transform:scaleX(0.9624);transform-origin:left center;text-shadow:1px 1px 2px rgba(0,0,0,0.55);">Upload File</div>
<div style="position:absolute;left:1410px;top:266px;width:905px;height:119px;box-sizing:border-box;border:2px solid #ced4da;border-radius:10px;background:#e9ecef;overflow:hidden;"><div style="position:absolute;left:0;top:0;width:504px;height:115px;background:#fff;"></div><div style="position:absolute;left:504px;top:0;width:2px;height:115px;background:#ced4da;"></div><div style="position:absolute;left:705px;top:0;width:2px;height:115px;background:#ced4da;"></div></div>
<div style="position:absolute;left:1454px;top:304.81px;font-size:39.5px;line-height:47px;color:#495057;font-weight:400;white-space:nowrap;transform:scaleX(0.9336);transform-origin:left center;">MicrosoftTeams-image (30).</div>
<div style="position:absolute;left:1957.5px;top:304.81px;font-size:39.5px;line-height:47px;color:#495057;font-weight:400;white-space:nowrap;transform:scaleX(0.8883);transform-origin:left center;">Browse</div>
<div style="position:absolute;left:2159px;top:304.81px;font-size:39.5px;line-height:47px;color:#495057;font-weight:400;white-space:nowrap;transform:scaleX(0.9151);transform-origin:left center;">Predict</div>
<div style="position:absolute;left:1411px;top:438.53px;font-size:45.5px;line-height:55px;color:#e9eaec;font-weight:700;white-space:nowrap;transform:scaleX(0.9205);transform-origin:left center;text-shadow:1px 1px 2px rgba(0,0,0,0.55);">Result</div>
<div style="position:absolute;left:1604px;top:428px;width:454px;height:70px;box-sizing:border-box;border:2px solid #3d5a00;border-radius:6px;background:#7cbb00;"></div>
<div style="position:absolute;left:1657px;top:443.20px;font-size:35.5px;line-height:43px;color:#ffffff;font-weight:400;white-space:nowrap;transform:scaleX(0.8801);transform-origin:left center;text-shadow:1px 2px 2px rgba(0,0,0,0.45);">Download Result (JSON)</div>
<div style="position:absolute;left:2123.6px;top:442.14px;font-size:40px;line-height:48px;color:#e9eaec;font-weight:700;white-space:nowrap;transform:scaleX(0.8724);transform-origin:left center;text-shadow:1px 1px 2px rgba(0,0,0,0.55);">Confidence</div>
<div style="position:absolute;left:1370px;top:513px;width:985px;height:67px;background:#33150e;"></div>
<div style="position:absolute;left:1370px;top:513px;width:88px;height:67px;background:#cf563b;"></div>
<div style="position:absolute;left:1396.5px;top:534.20px;font-size:22.5px;line-height:27px;color:rgba(255,255,255,0.88);font-weight:400;white-space:nowrap;letter-spacing:-1px;">P. 1</div>
<div style="position:absolute;left:1478.7px;top:527.85px;font-size:36.5px;line-height:44px;color:#ececec;font-weight:400;white-space:nowrap;">Name</div>
<div style="position:absolute;right:28px;top:530.22px;font-size:34px;line-height:41px;color:#ececec;font-weight:400;white-space:nowrap;">100.0%</div>
<div style="position:absolute;left:1370px;top:644px;width:985px;height:67px;background:#1f280e;"></div>
<div style="position:absolute;left:1370px;top:644px;width:88px;height:67px;background:#7ca33a;"></div>
<div style="position:absolute;left:1396.5px;top:665.20px;font-size:22.5px;line-height:27px;color:rgba(255,255,255,0.88);font-weight:400;white-space:nowrap;letter-spacing:-1px;">P. 1</div>
<div style="position:absolute;left:1478.7px;top:661.05px;font-size:34.5px;line-height:41px;color:#ececec;font-weight:400;white-space:nowrap;">Email</div>
<div style="position:absolute;right:28px;top:661.22px;font-size:34px;line-height:41px;color:#ececec;font-weight:400;white-space:nowrap;">100.0%</div>
<div style="position:absolute;left:1370px;top:774px;width:985px;height:67px;background:#172d38;"></div>
<div style="position:absolute;left:1370px;top:774px;width:88px;height:67px;background:#5cb5e0;"></div>
<div style="position:absolute;left:1396.5px;top:795.20px;font-size:22.5px;line-height:27px;color:rgba(255,255,255,0.88);font-weight:400;white-space:nowrap;letter-spacing:-1px;">P. 1</div>
<div style="position:absolute;left:1478.7px;top:789.53px;font-size:36px;line-height:43px;color:#ececec;font-weight:400;white-space:nowrap;">Phone</div>
<div style="position:absolute;right:28px;top:791.22px;font-size:34px;line-height:41px;color:#ececec;font-weight:400;white-space:nowrap;">100.0%</div>
<div style="position:absolute;left:1370px;top:904px;width:985px;height:67px;background:#2a1818;"></div>
<div style="position:absolute;left:1370px;top:904px;width:88px;height:67px;background:#a86262;"></div>
<div style="position:absolute;left:1396.5px;top:925.20px;font-size:22.5px;line-height:27px;color:rgba(255,255,255,0.88);font-weight:400;white-space:nowrap;letter-spacing:-1px;">P. 1</div>
<div style="position:absolute;left:1478.7px;top:918.85px;font-size:36.5px;line-height:44px;color:#ececec;font-weight:400;white-space:nowrap;">Position</div>
<div style="position:absolute;right:28px;top:921.22px;font-size:34px;line-height:41px;color:#ececec;font-weight:400;white-space:nowrap;">100.0%</div>
<div style="position:absolute;left:1370px;top:1035px;width:985px;height:67px;background:#36312e;"></div>
<div style="position:absolute;left:1370px;top:1035px;width:88px;height:67px;background:#d8c6bb;"></div>
<div style="position:absolute;left:1396.5px;top:1056.20px;font-size:22.5px;line-height:27px;color:rgba(255,255,255,0.6);font-weight:400;white-space:nowrap;letter-spacing:-1px;">P. 1</div>
<div style="position:absolute;left:1478.7px;top:1050.70px;font-size:35.5px;line-height:43px;color:#ececec;font-weight:400;white-space:nowrap;">TodaysSpeaker</div>
<div style="position:absolute;right:28px;top:1052.22px;font-size:34px;line-height:41px;color:#ececec;font-weight:400;white-space:nowrap;">100.0%</div>
<div style="position:absolute;left:1370px;top:1166px;width:985px;height:67px;background:#3c2a2a;"></div>
<div style="position:absolute;left:1370px;top:1166px;width:88px;height:67px;background:#f1a9a8;"></div>
<div style="position:absolute;left:1396.5px;top:1187.20px;font-size:22.5px;line-height:27px;color:rgba(255,255,255,0.6);font-weight:400;white-space:nowrap;letter-spacing:-1px;">P. 1</div>
<div style="position:absolute;left:1478.7px;top:1181.53px;font-size:36px;line-height:43px;color:#ececec;font-weight:400;white-space:nowrap;">MainTakeAway</div>
<div style="position:absolute;right:28px;top:1183.22px;font-size:34px;line-height:41px;color:#ececec;font-weight:400;white-space:nowrap;">100.0%</div>
<div style="position:absolute;left:1370px;top:1296px;width:985px;height:67px;background:#0a261b;"></div>
<div style="position:absolute;left:1370px;top:1296px;width:88px;height:67px;background:#2a9a6e;"></div>
<div style="position:absolute;left:1396.5px;top:1317.20px;font-size:22.5px;line-height:27px;color:rgba(255,255,255,0.88);font-weight:400;white-space:nowrap;letter-spacing:-1px;">P. 1</div>
<div style="position:absolute;left:1478.7px;top:1310.68px;font-size:37px;line-height:44px;color:#ececec;font-weight:400;white-space:nowrap;">WhatDoYouThink</div>
<div style="position:absolute;right:28px;top:1313.22px;font-size:34px;line-height:41px;color:#ececec;font-weight:400;white-space:nowrap;">100.0%</div>
<div style="position:absolute;left:1418px;top:983.03px;font-size:36px;line-height:43px;color:#ececec;font-weight:400;white-space:nowrap;">student</div>
<div style="position:absolute;left:1418px;top:1117.24px;font-size:32.5px;line-height:39px;color:#ececec;font-weight:400;white-space:nowrap;">JK, Patrick, will ...</div>
<div style="position:absolute;left:1418px;top:1244.03px;font-size:36px;line-height:43px;color:#ececec;font-weight:400;white-space:nowrap;">Applications of ML and AI in the real world</div>
<div style="position:absolute;left:1418px;top:1374.60px;font-size:35.5px;line-height:43px;color:#ececec;font-weight:400;white-space:nowrap;">master I learnt lots and / everything was presented really</div>
<div style="position:absolute;left:1418px;top:1427.50px;font-size:35.5px;line-height:43px;color:#ececec;font-weight:400;white-space:nowrap;">well / everyone spoke lood and dearly. I initially thought</div>
<div style="position:absolute;left:1418px;top:1480.40px;font-size:35.5px;line-height:43px;color:#ececec;font-weight:400;white-space:nowrap;">that Al and MC would be too overwhelming but-.</div>
<div style="position:absolute;left:1418px;top:1533.30px;font-size:35.5px;line-height:43px;color:#ececec;font-weight:400;white-space:nowrap;">thepresentations. made. gave.me . the motivation. for..</div>
<div style="position:absolute;left:1418px;top:1586.20px;font-size:35.5px;line-height:43px;color:#ececec;font-weight:400;white-space:nowrap;">get started and do smaller projects&quot;in those&quot;Helds.</div>
<svg width="2369" height="1738" style="position:absolute;left:0;top:0"><rect x="1407.0" y="592" width="18.4" height="18" fill="rgb(90,93,98)"/><rect x="1424.9" y="592" width="18.4" height="18" fill="rgb(79,82,87)"/><rect x="1460.7" y="592" width="18.4" height="18" fill="rgb(62,65,70)"/><rect x="1478.6" y="592" width="18.4" height="18" fill="rgb(74,77,82)"/><rect x="1496.5" y="592" width="18.4" height="18" fill="rgb(62,65,70)"/><rect x="1407.0" y="610" width="18.4" height="17" fill="rgb(110,113,118)"/><rect x="1424.9" y="610" width="18.4" height="17" fill="rgb(146,149,154)"/><rect x="1442.8" y="610" width="18.4" height="17" fill="rgb(169,172,177)"/><rect x="1460.7" y="610" width="18.4" height="17" fill="rgb(58,61,66)"/><rect x="1478.6" y="610" width="18.4" height="17" fill="rgb(69,72,77)"/><rect x="1496.5" y="610" width="18.4" height="17" fill="rgb(124,127,132)"/><rect x="1514.4" y="610" width="18.4" height="17" fill="rgb(124,127,132)"/><rect x="1532.3" y="610" width="18.4" height="17" fill="rgb(106,109,114)"/><rect x="1550.2" y="610" width="18.4" height="17" fill="rgb(128,131,136)"/><rect x="1568.1" y="610" width="18.4" height="17" fill="rgb(147,150,155)"/><rect x="1586.0" y="610" width="18.4" height="17" fill="rgb(160,163,168)"/><rect x="1496.5" y="627" width="18.4" height="13" fill="rgb(62,65,70)"/><rect x="1514.4" y="627" width="18.4" height="13" fill="rgb(68,71,76)"/><rect x="1532.3" y="627" width="18.4" height="13" fill="rgb(57,60,65)"/><rect x="1550.2" y="627" width="18.4" height="13" fill="rgb(60,63,68)"/><rect x="1411.5" y="726" width="18.2" height="22" fill="rgb(108,111,116)"/><rect x="1429.2" y="726" width="18.2" height="22" fill="rgb(96,99,104)"/><rect x="1446.9" y="726" width="18.2" height="22" fill="rgb(78,81,86)"/><rect x="1464.6" y="726" width="18.2" height="22" fill="rgb(120,123,128)"/><rect x="1482.3" y="726" width="18.2" height="22" fill="rgb(100,103,108)"/><rect x="1500.0" y="726" width="18.2" height="22" fill="rgb(78,81,86)"/><rect x="1517.7" y="726" width="18.2" height="22" fill="rgb(92,95,100)"/><rect x="1535.4" y="726" width="18.2" height="22" fill="rgb(86,89,94)"/><rect x="1553.1" y="726" width="18.2" height="22" fill="rgb(96,99,104)"/><rect x="1570.8" y="726" width="18.2" height="22" fill="rgb(120,123,128)"/><rect x="1588.5" y="726" width="18.2" height="22" fill="rgb(100,103,108)"/><rect x="1606.2" y="726" width="18.2" height="22" fill="rgb(84,87,92)"/><rect x="1623.9" y="726" width="18.2" height="22" fill="rgb(86,89,94)"/><rect x="1641.6" y="726" width="18.2" height="22" fill="rgb(100,103,108)"/><rect x="1659.3" y="726" width="18.2" height="22" fill="rgb(78,81,86)"/><rect x="1677.0" y="726" width="18.2" height="22" fill="rgb(100,103,108)"/><rect x="1694.7" y="726" width="18.2" height="22" fill="rgb(84,87,92)"/><rect x="1712.4" y="726" width="18.2" height="22" fill="rgb(108,111,116)"/><rect x="1730.1" y="726" width="18.2" height="22" fill="rgb(92,95,100)"/><rect x="1747.8" y="726" width="18.2" height="22" fill="rgb(84,87,92)"/><rect x="1765.5" y="726" width="18.2" height="22" fill="rgb(92,95,100)"/><rect x="1783.2" y="726" width="18.2" height="22" fill="rgb(86,89,94)"/><rect x="1800.9" y="726" width="18.2" height="22" fill="rgb(92,95,100)"/><rect x="1818.6" y="726" width="18.2" height="22" fill="rgb(120,123,128)"/><rect x="1836.3" y="726" width="18.2" height="22" fill="rgb(92,95,100)"/><rect x="1854.0" y="726" width="18.2" height="22" fill="rgb(92,95,100)"/><rect x="1871.7" y="726" width="18.2" height="22" fill="rgb(78,81,86)"/><rect x="1889.4" y="726" width="18.2" height="22" fill="rgb(78,81,86)"/><rect x="1907.1" y="726" width="18.2" height="22" fill="rgb(100,103,108)"/><rect x="1924.8" y="726" width="18.2" height="22" fill="rgb(100,103,108)"/><rect x="1942.5" y="726" width="18.2" height="22" fill="rgb(92,95,100)"/><rect x="1960.2" y="726" width="18.2" height="22" fill="rgb(92,95,100)"/><rect x="1977.9" y="726" width="18.2" height="22" fill="rgb(108,111,116)"/><rect x="1995.6" y="726" width="18.2" height="22" fill="rgb(96,99,104)"/><rect x="2013.3" y="726" width="18.2" height="22" fill="rgb(100,103,108)"/><rect x="2031.0" y="726" width="18.2" height="22" fill="rgb(100,103,108)"/><rect x="2066.4" y="726" width="18.2" height="22" fill="rgb(130,133,138)"/><rect x="2084.1" y="726" width="18.2" height="22" fill="rgb(84,87,92)"/><rect x="2101.8" y="726" width="18.2" height="22" fill="rgb(108,111,116)"/><rect x="2119.5" y="726" width="18.2" height="22" fill="rgb(78,81,86)"/><rect x="1411.5" y="748" width="18.2" height="23" fill="rgb(92,95,100)"/><rect x="1429.2" y="748" width="18.2" height="23" fill="rgb(84,87,92)"/><rect x="1446.9" y="748" width="18.2" height="23" fill="rgb(88,91,96)"/><rect x="1464.6" y="748" width="18.2" height="23" fill="rgb(88,91,96)"/><rect x="1482.3" y="748" width="18.2" height="23" fill="rgb(104,107,112)"/><rect x="1500.0" y="748" width="18.2" height="23" fill="rgb(80,83,88)"/><rect x="1517.7" y="748" width="18.2" height="23" fill="rgb(92,95,100)"/><rect x="1535.4" y="748" width="18.2" height="23" fill="rgb(58,61,66)"/><rect x="1553.1" y="748" width="18.2" height="23" fill="rgb(72,75,80)"/><rect x="1570.8" y="748" width="18.2" height="23" fill="rgb(92,95,100)"/><rect x="1588.5" y="748" width="18.2" height="23" fill="rgb(80,83,88)"/><rect x="1606.2" y="748" width="18.2" height="23" fill="rgb(104,107,112)"/><rect x="1623.9" y="748" width="18.2" height="23" fill="rgb(92,95,100)"/><rect x="1641.6" y="748" width="18.2" height="23" fill="rgb(104,107,112)"/><rect x="1659.3" y="748" width="18.2" height="23" fill="rgb(130,133,138)"/><rect x="1677.0" y="748" width="18.2" height="23" fill="rgb(92,95,100)"/><rect x="1694.7" y="748" width="18.2" height="23" fill="rgb(88,91,96)"/><rect x="1712.4" y="748" width="18.2" height="23" fill="rgb(170,173,178)"/><rect x="1730.1" y="748" width="18.2" height="23" fill="rgb(130,133,138)"/><rect x="1747.8" y="748" width="18.2" height="23" fill="rgb(88,91,96)"/><rect x="1765.5" y="748" width="18.2" height="23" fill="rgb(72,75,80)"/><rect x="1783.2" y="748" width="18.2" height="23" fill="rgb(104,107,112)"/><rect x="1800.9" y="748" width="18.2" height="23" fill="rgb(72,75,80)"/><rect x="1818.6" y="748" width="18.2" height="23" fill="rgb(92,95,100)"/><rect x="1836.3" y="748" width="18.2" height="23" fill="rgb(84,87,92)"/><rect x="1854.0" y="748" width="18.2" height="23" fill="rgb(72,75,80)"/><rect x="1871.7" y="748" width="18.2" height="23" fill="rgb(84,87,92)"/><rect x="1889.4" y="748" width="18.2" height="23" fill="rgb(92,95,100)"/><rect x="1907.1" y="748" width="18.2" height="23" fill="rgb(84,87,92)"/><rect x="1924.8" y="748" width="18.2" height="23" fill="rgb(72,75,80)"/><rect x="1942.5" y="748" width="18.2" height="23" fill="rgb(130,133,138)"/><rect x="1960.2" y="748" width="18.2" height="23" fill="rgb(72,75,80)"/><rect x="1977.9" y="748" width="18.2" height="23" fill="rgb(88,91,96)"/><rect x="1995.6" y="748" width="18.2" height="23" fill="rgb(160,163,168)"/><rect x="2013.3" y="748" width="18.2" height="23" fill="rgb(80,83,88)"/><rect x="2031.0" y="748" width="18.2" height="23" fill="rgb(96,99,104)"/><rect x="2066.4" y="748" width="18.2" height="23" fill="rgb(125,128,133)"/><rect x="2084.1" y="748" width="18.2" height="23" fill="rgb(92,95,100)"/><rect x="2101.8" y="748" width="18.2" height="23" fill="rgb(104,107,112)"/><rect x="2119.5" y="748" width="18.2" height="23" fill="rgb(130,133,138)"/><rect x="1535.4" y="771" width="18.2" height="16" fill="rgb(62,65,70)"/><rect x="1588.5" y="771" width="18.2" height="16" fill="rgb(72,75,80)"/><rect x="1606.2" y="771" width="18.2" height="16" fill="rgb(72,75,80)"/><rect x="1623.9" y="771" width="18.2" height="16" fill="rgb(68,71,76)"/><rect x="1641.6" y="771" width="18.2" height="16" fill="rgb(68,71,76)"/><rect x="1659.3" y="771" width="18.2" height="16" fill="rgb(62,65,70)"/><rect x="1783.2" y="771" width="18.2" height="16" fill="rgb(68,71,76)"/><rect x="1800.9" y="771" width="18.2" height="16" fill="rgb(62,65,70)"/><rect x="1995.6" y="771" width="18.2" height="16" fill="rgb(62,65,70)"/><rect x="1444.4" y="851" width="18.2" height="17" fill="rgb(70,73,78)"/><rect x="1462.1" y="851" width="18.2" height="17" fill="rgb(74,77,82)"/><rect x="1479.8" y="851" width="18.2" height="17" fill="rgb(80,83,88)"/><rect x="1497.5" y="851" width="18.2" height="17" fill="rgb(72,75,80)"/><rect x="1515.2" y="851" width="18.2" height="17" fill="rgb(70,73,78)"/><rect x="1532.9" y="851" width="18.2" height="17" fill="rgb(78,81,86)"/><rect x="1550.6" y="851" width="18.2" height="17" fill="rgb(70,73,78)"/><rect x="1568.3" y="851" width="18.2" height="17" fill="rgb(70,73,78)"/><rect x="1586.0" y="851" width="18.2" height="17" fill="rgb(72,75,80)"/><rect x="1603.7" y="851" width="18.2" height="17" fill="rgb(90,93,98)"/><rect x="1409.0" y="868" width="18.2" height="18" fill="rgb(82,85,90)"/><rect x="1426.7" y="868" width="18.2" height="18" fill="rgb(70,73,78)"/><rect x="1444.4" y="868" width="18.2" height="18" fill="rgb(150,153,158)"/><rect x="1462.1" y="868" width="18.2" height="18" fill="rgb(96,99,104)"/><rect x="1479.8" y="868" width="18.2" height="18" fill="rgb(76,79,84)"/><rect x="1497.5" y="868" width="18.2" height="18" fill="rgb(66,69,74)"/><rect x="1515.2" y="868" width="18.2" height="18" fill="rgb(96,99,104)"/><rect x="1532.9" y="868" width="18.2" height="18" fill="rgb(80,83,88)"/><rect x="1550.6" y="868" width="18.2" height="18" fill="rgb(72,75,80)"/><rect x="1568.3" y="868" width="18.2" height="18" fill="rgb(90,93,98)"/><rect x="1586.0" y="868" width="18.2" height="18" fill="rgb(88,91,96)"/><rect x="1603.7" y="868" width="18.2" height="18" fill="rgb(92,95,100)"/></svg>
<svg width="2369" height="1738" viewBox="0 0 2369 1738" style="position:absolute;left:0;top:0"><path d="M31.8,24.8 L50.5,24.8 Q51.8,24.8 52.8,25.8 L67,41.5 Q68.6,43.6 67,45.6 L51,61.8 Q49,63.6 47,61.8 L31,46.2 Q29.8,45 29.8,43.5 L29.8,26.8 Q29.8,24.8 31.8,24.8 Z" fill="#7fbc00"/><circle cx="38.3" cy="33" r="3.45" fill="#484b51"/><path d="M54.9,24.8 L60.3,24.8 L76.6,42 Q78,44 76.6,46 L60.2,62.4 Q59.4,63.2 58.2,63.2 L56.3,63.2 L72,46 Q73.2,44 72,42 Z" fill="#7fbc00"/><circle cx="2326.4" cy="43.5" r="18.6" fill="#cfcfcf"/><text x="2326.4" y="54" text-anchor="middle" font-family="Liberation Sans" font-weight="700" font-size="29" fill="#484b51">?</text><path d="M28,136.5 L54.2,114.8 Q56.5,113 58.8,114.8 L85,136.5 L81,141 L56.5,121 L32,141 Z" fill="#fff"/><rect x="68" y="114.5" width="8.4" height="15" fill="#fff"/><path d="M37,139 L56.5,123.5 L76,139 L76,157.8 Q76,159.6 74.2,159.6 L62,159.6 L62,147 L51.5,147 L51.5,159.6 L38.8,159.6 Q37,159.6 37,157.8 Z" fill="#fff"/><path d="M41,212 H71.4 Q75.4,212 75.4,216 V262 L56.2,250.5 L37,262 V216 Q37,212 41,212 Z" fill="#cbcbcb"/><path fill-rule="evenodd" fill="#cbcbcb" d="M46,311.6 H66.7 Q78.7,311.6 78.7,323.6 V344 Q78.7,356 66.7,356 H46 Q34,356 34,344 V323.6 Q34,311.6 46,311.6 Z M41.6,321.8 H71.3 Q73.3,321.8 73.3,323.8 V335.3 Q73.3,337.3 71.3,337.3 H41.6 Q39.6,337.3 39.6,335.3 V323.8 Q39.6,321.8 41.6,321.8 Z M56.4,341.4 A5.5,5.5 0 1 0 56.41,341.4 Z"/><polygon points="46,355 66.5,355 72.7,362.7 40,362.7" fill="#cbcbcb"/><rect x="44.2" y="427.5" width="7.2" height="7.2" rx="1" fill="#fff"/><rect x="77.7" y="427.5" width="7.2" height="7.2" rx="1" fill="#fff"/><rect x="44.2" y="452.3" width="7.2" height="7.2" rx="1" fill="#fff"/><rect x="77.7" y="452.3" width="7.2" height="7.2" rx="1" fill="#fff"/><rect x="47.5" y="431" width="34" height="25" fill="#fff"/><rect x="28.1" y="414.9" width="41.3" height="32" fill="none" stroke="#5a5d63" stroke-width="3"/><rect x="28.1" y="414.9" width="7.2" height="7.2" rx="1" fill="#fff"/><rect x="62.2" y="414.9" width="7.2" height="7.2" rx="1" fill="#fff"/><rect x="28.1" y="439.7" width="7.2" height="7.2" rx="1" fill="#fff"/><rect x="62.2" y="439.7" width="7.2" height="7.2" rx="1" fill="#fff"/><rect x="31.5" y="418.4" width="34.5" height="25" fill="#fff"/><rect x="31" y="518.1" width="50.8" height="6.8" rx="3.4" fill="#cbcbcb"/><rect x="52.7" y="515.0" width="6.6" height="13" rx="2.5" fill="#cbcbcb"/><rect x="31" y="534.0" width="50.8" height="6.8" rx="3.4" fill="#cbcbcb"/><rect x="65.5" y="530.9" width="6.6" height="13" rx="2.5" fill="#cbcbcb"/><rect x="31" y="549.5" width="50.8" height="6.8" rx="3.4" fill="#cbcbcb"/><rect x="40.7" y="546.4" width="6.6" height="13" rx="2.5" fill="#cbcbcb"/><rect x="43.2" y="612" width="6.8" height="17" rx="3.4" fill="#cbcbcb"/><rect x="62" y="612" width="6.8" height="17" rx="3.4" fill="#cbcbcb"/><rect x="36.8" y="627.7" width="38.4" height="6.4" rx="1.5" fill="#cbcbcb"/><path d="M40.5,633 H71.7 V637 A15.6,15.6 0 0 1 40.5,637 Z" fill="#cbcbcb"/><rect x="52.7" y="648" width="7" height="14.6" fill="#cbcbcb"/><path d="M49.4,1614 L49.8,1606.8 Q50,1605.6 51.4,1605.6 L60.6,1605.6 Q62,1605.6 62.2,1606.8 L62.6,1614 Z" fill="#cbcbcb" transform="rotate(0 56.2 1630.2)"/><path d="M49.4,1614 L49.8,1606.8 Q50,1605.6 51.4,1605.6 L60.6,1605.6 Q62,1605.6 62.2,1606.8 L62.6,1614 Z" fill="#cbcbcb" transform="rotate(60 56.2 1630.2)"/><path d="M49.4,1614 L49.8,1606.8 Q50,1605.6 51.4,1605.6 L60.6,1605.6 Q62,1605.6 62.2,1606.8 L62.6,1614 Z" fill="#cbcbcb" transform="rotate(120 56.2 1630.2)"/><path d="M49.4,1614 L49.8,1606.8 Q50,1605.6 51.4,1605.6 L60.6,1605.6 Q62,1605.6 62.2,1606.8 L62.6,1614 Z" fill="#cbcbcb" transform="rotate(180 56.2 1630.2)"/><path d="M49.4,1614 L49.8,1606.8 Q50,1605.6 51.4,1605.6 L60.6,1605.6 Q62,1605.6 62.2,1606.8 L62.6,1614 Z" fill="#cbcbcb" transform="rotate(240 56.2 1630.2)"/><path d="M49.4,1614 L49.8,1606.8 Q50,1605.6 51.4,1605.6 L60.6,1605.6 Q62,1605.6 62.2,1606.8 L62.6,1614 Z" fill="#cbcbcb" transform="rotate(300 56.2 1630.2)"/><circle cx="56.2" cy="1630.2" r="18.8" fill="#cbcbcb"/><circle cx="56.2" cy="1630.2" r="7.4" fill="#3b3e43"/><rect x="1388.8" y="96.8" width="12" height="11.4" rx="2.2" fill="#f0f0f0"/><rect x="1416" y="96.8" width="12" height="11.4" rx="2.2" fill="#f0f0f0"/><rect x="1402.4" y="115.5" width="12" height="11.4" rx="2.2" fill="#f0f0f0"/><rect x="1400" y="100.4" width="17" height="3.6" fill="#f0f0f0"/><path d="M1398.5,107 L1404.5,116" stroke="#f0f0f0" stroke-width="3.6"/><polygon points="43.6,1694 53.6,1705.2 33.6,1705.2" fill="#fff"/><rect x="39.4" y="1704.5" width="8.4" height="12" rx="1.2" fill="#fff"/><path d="M30.5,1713.8 H37.8 Q39,1717.8 43.6,1717.8 Q48.2,1717.8 49.4,1713.8 H56.5 Q58,1713.8 58,1715.3 V1721.5 Q58,1723 56.5,1723 H30.5 Q29,1723 29,1721.5 V1715.3 Q29,1713.8 30.5,1713.8 Z" fill="#fff"/><rect x="48.5" y="1718.5" width="1.6" height="1.6" fill="#14679a"/><rect x="52" y="1718.5" width="1.6" height="1.6" fill="#14679a"/><rect x="256.4" y="1694" width="8.4" height="12" fill="#fff"/><polygon points="260.6,1716 270.6,1705 250.6,1705" fill="#fff"/><path d="M247.5,1713.8 H254.8 Q256,1717.8 260.6,1717.8 Q265.2,1717.8 266.4,1713.8 H273.5 Q275,1713.8 275,1715.3 V1721.5 Q275,1723 273.5,1723 H247.5 Q246,1723 246,1721.5 V1715.3 Q246,1713.8 247.5,1713.8 Z" fill="#fff"/><rect x="265.5" y="1718.5" width="1.6" height="1.6" fill="#14679a"/><rect x="269" y="1718.5" width="1.6" height="1.6" fill="#14679a"/><path d="M479,1695.5 H490.5 L505,1710 Q506,1711 505,1712 L494,1723 Q493,1724 492,1723 L477.6,1708.6 V1697 Q477.6,1695.5 479,1695.5 Z" fill="#fff"/><circle cx="484" cy="1701.8" r="2.3" fill="#14679a"/><path d="M574.3,1708 Q590.3,1690 606.3,1708 Q590.3,1726 574.3,1708 Z" fill="#fff"/><circle cx="590.3" cy="1708" r="6.3" fill="#14679a"/><circle cx="590.3" cy="1708" r="3.6" fill="#fff"/><path d="M674.3,1694 L678,1697 L681.7,1694 L685.5,1697 L689.2,1694 L693,1697 L696.6,1694 V1723 L693,1720 L689.2,1723 L685.5,1720 L681.7,1723 L678,1720 L674.3,1723 Z" fill="#fff"/><rect x="679" y="1702" width="13" height="2.2" fill="#14679a"/><rect x="679" y="1707.5" width="13" height="2.2" fill="#14679a"/><rect x="679" y="1713" width="13" height="2.2" fill="#14679a"/><g fill="none" stroke="#fff" stroke-width="2.8"><circle cx="2253.6" cy="1698.6" r="3"/><circle cx="2253.6" cy="1719" r="3"/><circle cx="2268.5" cy="1704.5" r="3"/><line x1="2253.6" y1="1701.6" x2="2253.6" y2="1716"/><path d="M2268.5,1707.5 Q2268.5,1714 2256,1716.5"/></g><text x="70" y="1719" font-family="Liberation Sans" font-size="29" fill="#ffffff" textLength="148" lengthAdjust="spacingAndGlyphs">PoC storage</text><text x="287" y="1719" font-family="Liberation Sans" font-size="29" fill="#ffffff" textLength="148" lengthAdjust="spacingAndGlyphs">PoC storage</text><text x="517.5" y="1719.5" font-family="Liberation Sans" font-size="29.5" fill="#ffffff">8</text><text x="617.5" y="1719.5" font-family="Liberation Sans" font-size="29.5" fill="#ffffff">8</text><text x="706.6" y="1719.5" font-family="Liberation Sans" font-size="29.5" fill="#ffffff">8</text><text x="2340" y="1719.4" text-anchor="end" font-family="Liberation Sans" font-size="26.5" fill="#ffffff">2.1.0</text><defs><filter id="sh" x="-20%" y="-20%" width="140%" height="140%"><feDropShadow dx="1" dy="3" stdDeviation="2.5" flood-color="#000" flood-opacity="0.5"/></filter></defs><g filter="url(#sh)"><line x1="105" y1="469" x2="1918.9979330331525" y2="386.40909568196133" stroke="#fb3d43" stroke-width="7" stroke-linecap="round"/><polygon points="1938,385.6 1917.5,397.5 1916.5,375.5" fill="#fb3d43"/></g><g filter="url(#sh)"><line x1="2043" y1="390.4" x2="2165.698961684317" y2="393.96443744742714" stroke="#fb3d43" stroke-width="7" stroke-linecap="round"/><polygon points="2185.7,395 2163.3,404.9 2164.1,382.9" fill="#fb3d43"/></g><g filter="url(#sh)"><circle cx="56" cy="489.5" r="31.6" fill="#ff0000"/></g><path d="M55.3,507 V480.5 C52.8,483.2 50.3,485 47.3,486.6 V481.8 C51.5,479.8 54.8,477 57.2,474.6 H60 V507 Z" fill="#e6e6e6"/><g filter="url(#sh)"><circle cx="1990.9" cy="371" r="31.6" fill="#ff0000"/></g><text x="1990.9" y="387" text-anchor="middle" font-family="Liberation Sans" font-size="44" fill="#e6e6e6" stroke="#e6e6e6" stroke-width="0.9">2</text><g filter="url(#sh)"><circle cx="2234.7" cy="386" r="31.6" fill="#ff0000"/></g><text x="2234.7" y="402" text-anchor="middle" font-family="Liberation Sans" font-size="44" fill="#e6e6e6" stroke="#e6e6e6" stroke-width="0.9">3</text></svg>
</body></html>
